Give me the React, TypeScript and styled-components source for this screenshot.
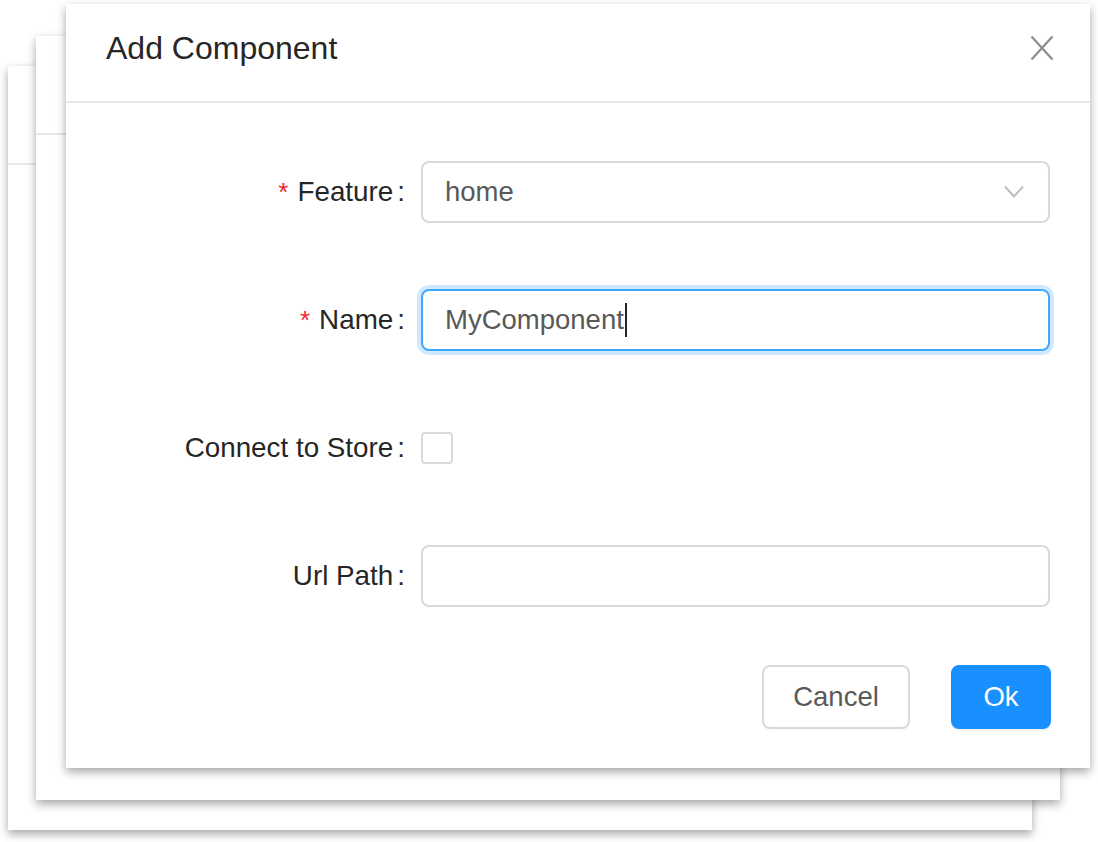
import React from "react";
import styled, { createGlobalStyle } from "styled-components";

const GlobalStyle = createGlobalStyle`
  html, body { margin: 0; padding: 0; background: #fff; }
  body { font-family: "Liberation Sans", Arial, Helvetica, sans-serif; }
  * { box-sizing: border-box; }
`;

const Stage = styled.div`
  display: grid;
  width: 1098px;
  height: 842px;
  overflow: hidden;
`;

const Card = styled.section<{ $x: number; $y: number }>`
  grid-area: 1 / 1;
  align-self: start;
  justify-self: start;
  margin: ${(p) => p.$y}px 0 0 ${(p) => p.$x}px;
  width: 1024px;
  height: 764px;
  background: #fff;
  box-shadow: 0 4px 9px rgba(0, 0, 0, 0.35);
  display: flex;
  flex-direction: column;
`;

const Header = styled.header`
  height: 99px;
  flex: none;
  display: flex;
  align-items: center;
  justify-content: space-between;
  padding: 22px 36px 31px 40px;
  border-bottom: 2px solid #e8e8e8;
`;

const Title = styled.h2`
  margin: 0;
  font-size: 32px;
  line-height: 44px;
  font-weight: 400;
  color: #262626;
`;

const CloseButton = styled.button`
  width: 24px;
  height: 26px;
  padding: 0;
  border: 0;
  background: transparent;
  display: flex;
  align-items: center;
  justify-content: center;
  cursor: pointer;
`;

const Body = styled.div`
  display: flex;
  flex-direction: column;
  gap: 64px;
  padding: 57px 40px 0 0;
`;

const FormRow = styled.div`
  display: grid;
  grid-template-columns: 1fr 629px;
  height: 64px;
  align-items: center;
`;

const Label = styled.label`
  display: flex;
  justify-content: flex-end;
  align-items: center;
  font-size: 27.8px;
  line-height: 40px;
  color: #262626;
  white-space: nowrap;
  &::after {
    content: ":";
    margin: 0 16px 0 4px;
  }
`;

const Required = styled.span`
  color: #f5222d;
  margin-right: 9px;
  font-size: 26px;
`;

const Field = styled.div<{ $focused?: boolean }>`
  height: 62px;
  display: flex;
  align-items: center;
  padding: 0 24px 0 22px;
  border: 2px solid ${(p) => (p.$focused ? "#40a9ff" : "#d9d9d9")};
  border-radius: 8px;
  box-shadow: ${(p) => (p.$focused ? "0 0 0 4px rgba(24, 144, 255, 0.2)" : "none")};
  background: #fff;
  font-size: 27.5px;
  color: #595959;
`;

const Caret = styled.span`
  display: inline-block;
  width: 2px;
  height: 34px;
  margin-left: 1px;
  background: #262626;
`;

const Chevron = styled.svg`
  margin-left: auto;
`;

const Checkbox = styled.span`
  display: block;
  width: 32px;
  height: 32px;
  border: 2px solid #d9d9d9;
  border-radius: 4px;
  background: #fff;
`;

const Footer = styled.footer`
  display: flex;
  justify-content: flex-end;
  gap: 41px;
  padding: 57px 39px 39px 0;
`;

const Button = styled.button<{ $primary?: boolean }>`
  height: 64px;
  width: ${(p) => (p.$primary ? "100px" : "148px")};
  border-radius: 8px;
  border: 2px solid ${(p) => (p.$primary ? "#1890ff" : "#d9d9d9")};
  background: ${(p) => (p.$primary ? "#1890ff" : "#fff")};
  color: ${(p) => (p.$primary ? "#fff" : "#595959")};
  font-family: "Liberation Sans", Arial, sans-serif;
  font-size: 27.5px;
  box-shadow: 0 2px 0 rgba(0, 0, 0, ${(p) => (p.$primary ? 0.045 : 0.015)});
  cursor: pointer;
`;

const BackCard = ({ x, y }: { x: number; y: number }) => (
  <Card $x={x} $y={y}>
    <Header />
  </Card>
);

export default function App() {
  return (
    <>
      <GlobalStyle />
      <Stage>
        <BackCard x={8} y={66} />
        <BackCard x={36} y={36} />
        <Card $x={66} $y={4}>
          <Header>
            <Title>Add Component</Title>
            <CloseButton aria-label="Close">
              <svg width="24" height="26" viewBox="0 0 24 26">
                <path d="M1.5 1.5 L22.5 24.5 M22.5 1.5 L1.5 24.5" stroke="#8c8c8c" strokeWidth="2.2" fill="none" />
              </svg>
            </CloseButton>
          </Header>
          <Body>
            <FormRow>
              <Label>
                <Required>*</Required>Feature
              </Label>
              <Field>
                <span>home</span>
                <Chevron width="20" height="14" viewBox="0 0 20 14">
                  <polyline points="1,1.5 10,11.5 19,1.5" stroke="#bfbfbf" strokeWidth="2" fill="none" />
                </Chevron>
              </Field>
            </FormRow>
            <FormRow>
              <Label>
                <Required>*</Required>Name
              </Label>
              <Field $focused>
                <span>MyComponent</span>
                <Caret />
              </Field>
            </FormRow>
            <FormRow>
              <Label>Connect to Store</Label>
              <Checkbox />
            </FormRow>
            <FormRow>
              <Label>Url Path</Label>
              <Field />
            </FormRow>
          </Body>
          <Footer>
            <Button>Cancel</Button>
            <Button $primary>Ok</Button>
          </Footer>
        </Card>
      </Stage>
    </>
  );
}
